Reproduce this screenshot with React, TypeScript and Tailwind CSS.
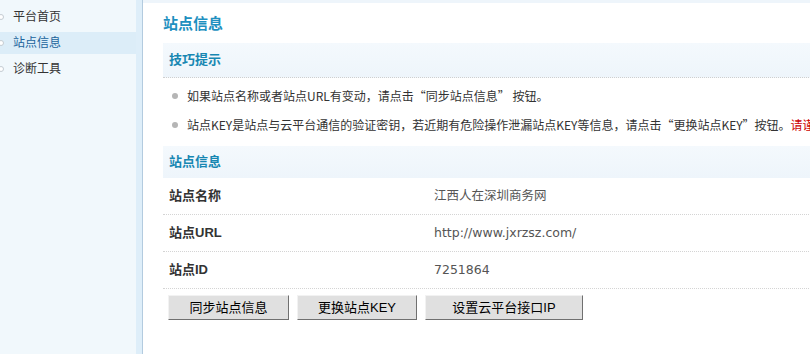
import React from "react"

const menu = [
  { id: 1, title: "平台首页", active: false },
  { id: 2, title: "站点信息", active: true },
  { id: 3, title: "诊断工具", active: false },
]

const rows = [
  { label: "站点名称", value: "江西人在深圳商务网" },
  { label: "站点URL", value: "http://www.jxrzsz.com/" },
  { label: "站点ID", value: "7251864" },
]

const buttons = [
  { title: "同步站点信息", w: "w-[121px]" },
  { title: "更换站点KEY", w: "w-[120px]" },
  { title: "设置云平台接口IP", w: "w-[158px]" },
]

export default function App() {
  return (
    <div className="flex h-[354px] w-[810px] overflow-hidden bg-white font-['Liberation_Sans','Noto_Sans_CJK_SC',sans-serif] text-[#333]">
      {/* Sidebar */}
      <aside className="flex w-[143px] shrink-0 border-r border-[#b3cbdf]">
        <div className="flex w-[136px] flex-col gap-[4px] bg-[#f1f8fc] pt-[6px]">
          {menu.map((item) => (
            <div
              key={item.id}
              className={`flex h-[22px] items-center text-[12px] ${
                item.active ? "bg-[#dcedf8] text-[#20649c]" : "text-[#333]"
              }`}
            >
              <span className="ml-[-2px] h-[6px] w-[6px] shrink-0 rounded-full border border-[#c4ccd2] bg-white" />
              <span className="ml-[9px]">{item.title}</span>
            </div>
          ))}
        </div>
        <div className="w-[6px] bg-[#deeef9]" />
      </aside>

      {/* Main */}
      <main className="flex-1 overflow-hidden border-t-[3px] border-[#eef5fb]">
        <div className="w-[700px] pl-[20px]">
          <h1 className="flex h-[40px] items-center pt-[3px] text-[15px] font-bold text-[#1e90c0]">站点信息</h1>

          {/* Tips */}
          <div className="flex h-[35px] items-center border-b border-dotted border-[#cfcfcf] bg-gradient-to-b from-[#f4f9fd] to-[#eef5fb] pl-[6px] text-[13px] font-bold text-[#1787b2]">
            技巧提示
          </div>
          <ul className="pt-[3px] font-['Noto_Sans_CJK_SC',sans-serif] text-[12px] leading-[29px]">
            <li className="flex items-center whitespace-nowrap pl-[9px]">
              <span className="mr-[9px] h-[6px] w-[6px] shrink-0 rounded-full bg-[#b5b5b5]" />
              如果站点名称或者站点URL有变动，请点击“同步站点信息” 按钮。
            </li>
            <li className="flex items-center whitespace-nowrap pl-[9px]">
              <span className="mr-[9px] h-[6px] w-[6px] shrink-0 rounded-full bg-[#b5b5b5]" />
              站点KEY是站点与云平台通信的验证密钥，若近期有危险操作泄漏站点KEY等信息，请点击“更换站点KEY”按钮。
              <span className="text-[#cc0000]">请谨慎操作</span>
            </li>
          </ul>

          {/* Site info */}
          <div className="mt-[7px] flex h-[32px] items-center bg-gradient-to-b from-[#f4f9fd] to-[#eef5fb] pl-[6px] text-[13px] font-bold text-[#1787b2]">
            站点信息
          </div>
          {rows.map((row) => (
            <div key={row.label} className="flex h-[37px] items-center border-b border-dotted border-[#d4d4d4] text-[13px]">
              <span className="w-[271px] pl-[6px] font-bold text-[#333]">{row.label}</span>
              <span className="font-['DejaVu_Sans','Noto_Sans_CJK_SC',sans-serif] text-[12.5px] text-[#555]">{row.value}</span>
            </div>
          ))}

          {/* Buttons */}
          <div className="mt-[6px] flex gap-[8px] pl-[5px]">
            {buttons.map((b) => (
              <button
                key={b.title}
                className={`${b.w} h-[25px] border border-t-[#f2f2f2] border-l-[#f2f2f2] border-b-[#707070] border-r-[#707070] bg-[#e0e0e0] text-[13px] text-black`}
              >
                {b.title}
              </button>
            ))}
          </div>
        </div>
      </main>
    </div>
  )
}
